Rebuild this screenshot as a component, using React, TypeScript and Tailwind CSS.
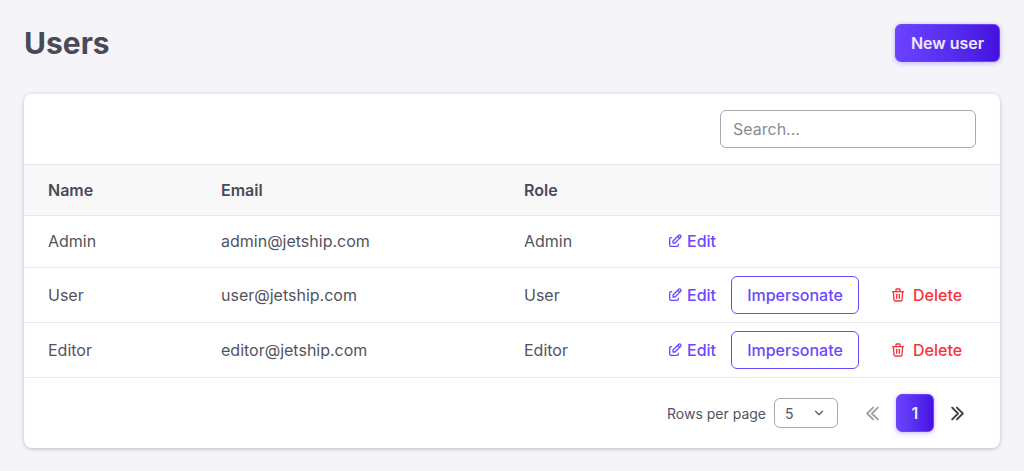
import { TbEdit, TbTrash, TbChevronDown } from "react-icons/tb";

const rows = [
  { name: "Admin", email: "admin@jetship.com", role: "Admin", extra: false, h: "h-[52px]", pad: "pb-[2px]" },
  { name: "User", email: "user@jetship.com", role: "User", extra: true, h: "h-[55px]", pad: "" },
  { name: "Editor", email: "editor@jetship.com", role: "Editor", extra: true, h: "h-[55px]", pad: "" },
];

function DoubleChevron({ dir, className }: { dir: "left" | "right"; className: string }) {
  return (
    <svg viewBox="0 0 24 24" fill="none" stroke="currentColor" strokeWidth={2.4} strokeLinecap="round" strokeLinejoin="round" className={className}>
      <path d={dir === "left" ? "M18.75 19.5l-7.5-7.5 7.5-7.5m-6 15L5.25 12l7.5-7.5" : "M5.25 4.5l7.5 7.5-7.5 7.5m6-15l7.5 7.5-7.5 7.5"} />
    </svg>
  );
}

export default function App() {
  return (
    <div className="min-h-[471px] bg-[#f4f4f9] p-6 text-[#53535f] font-['Inter',sans-serif]">
      <div className="flex items-center justify-between h-[38px]">
        <h1 className="text-[30px] leading-9 font-bold text-[#4a4a57]">Users</h1>
        <button className="h-[38px] w-[105px] rounded-md text-[16px] font-semibold text-[#ece8ff] bg-gradient-to-r from-[#6c42ff] to-[#4510e0] border border-[#6a45f5] shadow-[0_1px_5px_rgba(90,50,250,0.35)]">
          New user
        </button>
      </div>
      <div className="mt-8 bg-white rounded-lg shadow-[0_1px_4px_rgba(0,0,0,0.22)] overflow-hidden">
        <div className="h-[70px] flex items-center justify-end pr-6">
          <input
            placeholder="Search..."
            className="w-[256px] h-[38px] rounded-md border border-[#a8a8ae] px-3 text-[16px] placeholder:text-[#8a8a94] outline-none"
          />
        </div>
        <table className="w-full table-fixed border-collapse text-[16px]">
          <colgroup>
            <col className="w-[173px]" />
            <col className="w-[303px]" />
            <col className="w-[144px]" />
            <col />
          </colgroup>
          <thead>
            <tr className="h-[51px] bg-[#f8f8f9] border-y border-[#e8e8ec]">
              <th className="pl-6 text-left font-semibold text-[#4a4a57]">Name</th>
              <th className="pl-6 text-left font-semibold text-[#4a4a57]">Email</th>
              <th className="pl-6 text-left font-semibold text-[#4a4a57]">Role</th>
              <th />
            </tr>
          </thead>
          <tbody>
            {rows.map((r) => (
              <tr key={r.name} className={`${r.h} border-b border-[#e8e8ec]`}>
                <td className={`pl-6 ${r.pad}`}>{r.name}</td>
                <td className={`pl-6 ${r.pad}`}>{r.email}</td>
                <td className={`pl-6 ${r.pad}`}>{r.role}</td>
                <td className={`pl-[23px] ${r.pad}`}>
                  <div className="flex items-center">
                    <a className="flex items-center gap-1 w-[64px] font-medium text-[#6c47ff]">
                      <TbEdit className="w-4 h-4" />
                      Edit
                    </a>
                    {r.extra && (
                      <>
                        <button className="w-[128px] h-[38px] rounded-md border border-[#6c47ff] font-medium text-[#6c47ff]">
                          Impersonate
                        </button>
                        <a className="ml-[31px] flex items-center gap-[7px] font-medium text-[#f8333c]">
                          <TbTrash className="w-4 h-4" />
                          Delete
                        </a>
                      </>
                    )}
                  </div>
                </td>
              </tr>
            ))}
          </tbody>
        </table>
        <div className="h-[70px] flex items-center justify-end pr-[33px]">
          <span className="text-[14px] mr-2">Rows per page</span>
          <div className="w-16 h-[30px] rounded-md border border-[#a8a8ae] flex items-center justify-between pl-[10px] pr-[11px] text-[14px]">
            5
            <TbChevronDown className="w-3.5 h-3.5" />
          </div>
          <DoubleChevron dir="left" className="ml-[25px] w-[19px] h-[19px] text-[#a0a0a8]" />
          <button className="ml-[14px] w-[38px] h-[38px] rounded-md text-[16px] font-semibold text-[#ece8ff] bg-gradient-to-r from-[#6c42ff] to-[#4510e0] border border-[#6a45f5] shadow-[0_1px_5px_rgba(90,50,250,0.35)]">
            1
          </button>
          <DoubleChevron dir="right" className="ml-[14px] w-[19px] h-[19px] text-[#3f3f4b]" />
        </div>
      </div>
    </div>
  );
}
